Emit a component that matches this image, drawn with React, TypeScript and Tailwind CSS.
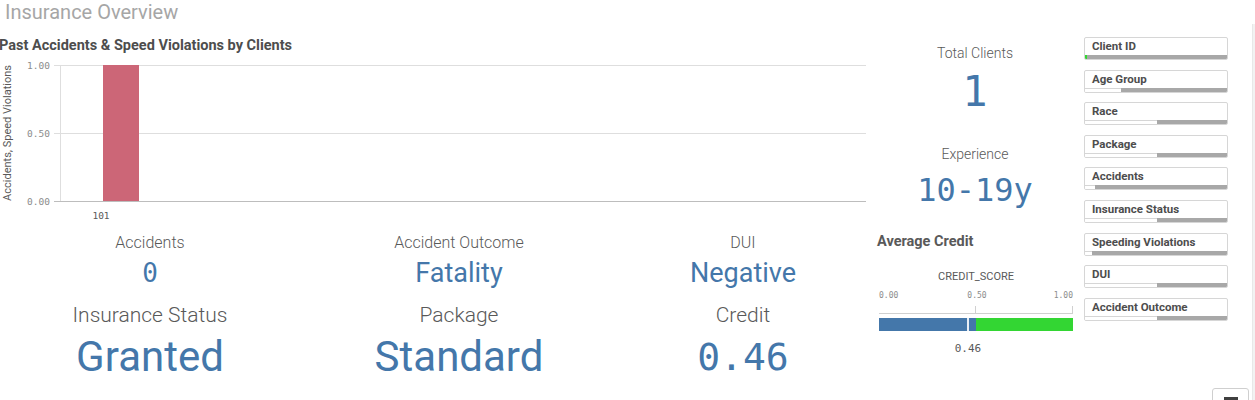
const blue = "text-[#4477aa]";

const filters = [
  { label: "Client ID", white: 0, green: true },
  { label: "Age Group", white: 36 },
  { label: "Race", white: 72 },
  { label: "Package", white: 72 },
  { label: "Accidents", white: 10 },
  { label: "Insurance Status", white: 72 },
  { label: "Speeding Violations", white: 7 },
  { label: "DUI", white: 72 },
  { label: "Accident Outcome", white: 72 },
];

function BarChart() {
  // page y = svg y + 55
  const ticks = [
    { label: "1.00", y: 10 },
    { label: "0.50", y: 78 },
    { label: "0.00", y: 146 },
  ];
  return (
    <svg width={868} height={170} className="block">
      <text
        x={11}
        y={78}
        transform="rotate(-90 11 78)"
        textAnchor="middle"
        fontSize={11}
        fill="#595959"
        fontFamily="Roboto, sans-serif"
      >
        Accidents, Speed Violations
      </text>
      {ticks.map((t) => (
        <g key={t.label}>
          <line
            x1={54}
            x2={866}
            y1={t.y + 0.5}
            y2={t.y + 0.5}
            stroke={t.y === 146 ? "#bdbdbd" : "#dedede"}
          />
          <text
            x={50}
            y={t.y + 3.5}
            textAnchor="end"
            fontSize={9.5}
            fill="#8c8c8c"
            fontFamily="'DejaVu Sans Mono', monospace"
          >
            {t.label}
          </text>
        </g>
      ))}
      <line x1={60.5} x2={60.5} y1={10} y2={146} stroke="#dedede" />
      <rect x={103} y={10} width={36} height={136} fill="#cc6677" />
      <text
        x={101}
        y={164}
        textAnchor="middle"
        fontSize={9.5}
        fill="#595959"
        fontFamily="'DejaVu Sans Mono', monospace"
      >
        101
      </text>
    </svg>
  );
}

function Kpi({
  label,
  value,
  bigLabel,
  bigValue,
  mono,
  bigMono,
  width,
}: {
  label: string;
  value: string;
  bigLabel: string;
  bigValue: string;
  mono?: boolean;
  bigMono?: boolean;
  width: string;
}) {
  return (
    <div className={`${width} flex flex-col items-center`}>
      <div className="text-[16px] leading-[20px] text-[#595959] font-light">{label}</div>
      <div
        className={`mt-[5px] leading-[30px] ${blue} ${
          mono ? "font-['DejaVu_Sans_Mono',monospace] text-[26px]" : "text-[27px]"
        }`}
      >
        {value}
      </div>
      <div className="mt-[15px] text-[21px] leading-[24px] text-[#595959] font-light">
        {bigLabel}
      </div>
      <div
        className={`mt-[7px] leading-[46px] ${blue} ${
          bigMono ? "font-['DejaVu_Sans_Mono',monospace] text-[38px]" : "text-[42px]"
        }`}
      >
        {bigValue}
      </div>
    </div>
  );
}

function Gauge() {
  return (
    <div className="ml-[11px] w-[194px]">
      <div className="text-center text-[11px] leading-[14px] text-[#595959]">CREDIT_SCORE</div>
      <div className="mt-[7px] flex justify-between text-[8px] leading-[10px] text-[#8c8c8c] font-['DejaVu_Sans_Mono',monospace]">
        <span>0.00</span>
        <span className="pl-[2px]">0.50</span>
        <span>1.00</span>
      </div>
      <svg width={194} height={31} className="block">
        <line x1={0} x2={194} y1={12.5} y2={12.5} stroke="#d0d0d0" />
        <line x1={96.5} x2={96.5} y1={5} y2={12} stroke="#d0d0d0" />
        <line x1={193.5} x2={193.5} y1={5} y2={12} stroke="#d0d0d0" />
        <rect x={0} y={17} width={97} height={13} fill="#4477aa" />
        <rect x={97} y={17} width={97} height={13} fill="#33d633" />
        <rect x={88} y={17} width={2} height={13} fill="#e8eef5" />
      </svg>
      <div className="mt-[10px] w-[178px] text-center text-[11px] leading-[14px] text-[#595959] font-['DejaVu_Sans_Mono',monospace]">
        0.46
      </div>
    </div>
  );
}

export default function App() {
  return (
    <div className="relative w-[1255px] h-[400px] overflow-hidden bg-white font-['Roboto','Liberation_Sans',sans-serif]">
      <div className="pl-[5px] h-[24px] text-[20px] leading-[24px] text-[#a6a6a6]">
        Insurance Overview
      </div>
      <div className="flex">
        {/* chart + kpis */}
        <div className="w-[868px]">
          <div className="mt-[13px] text-[14.5px] leading-[18px] font-bold text-[#4d4d4d] -ml-[1px]">
            Past Accidents &amp; Speed Violations by Clients
          </div>
          <BarChart />
          <div className="mt-[8px] flex">
            <Kpi
              width="w-[300px]"
              label="Accidents"
              value="0"
              mono
              bigLabel="Insurance Status"
              bigValue="Granted"
            />
            <Kpi
              width="w-[318px]"
              label="Accident Outcome"
              value="Fatality"
              bigLabel="Package"
              bigValue="Standard"
            />
            <Kpi
              width="w-[250px]"
              label="DUI"
              value="Negative"
              bigLabel="Credit"
              bigValue="0.46"
              bigMono
            />
          </div>
        </div>

        {/* totals + gauge */}
        <div className="w-[214px] flex flex-col">
          <div className="mt-[19px] text-center text-[14px] leading-[20px] text-[#595959] font-light">
            Total Clients
          </div>
          <div className={`mt-[7px] text-center text-[42px] leading-[44px] ${blue} font-['DejaVu_Sans_Mono',monospace]`}>
            1
          </div>
          <div className="mt-[30px] text-center text-[14px] leading-[20px] text-[#595959] font-light">
            Experience
          </div>
          <div className={`mt-[8px] text-center text-[32px] leading-[36px] ${blue} font-['DejaVu_Sans_Mono',monospace]`}>
            10-19y
          </div>
          <div className="mt-[25px] pl-[9px] text-[14.5px] leading-[18px] font-bold text-[#595959]">
            Average Credit
          </div>
          <div className="mt-[19px]">
            <Gauge />
          </div>
        </div>

        {/* filter panes */}
        <div className="ml-[2px] mt-[13px] w-[144px] flex flex-col gap-[9.6px]">
          {filters.map((f) => (
            <div
              key={f.label}
              className="h-[23px] flex flex-col border border-[#d6d6d6] rounded-[2px] bg-white overflow-hidden"
            >
              <div className="flex-1 pl-[7px] text-[11.5px] leading-[17px] font-bold text-[#4d4d4d]">
                {f.label}
              </div>
              <div className="h-[4px] flex">
                {f.green && <div className="w-[2px] bg-[#33d633]" />}
                {f.white > 0 && (
                  <div
                    className="border-t border-[#d6d6d6] bg-white"
                    style={{ width: f.white }}
                  />
                )}
                <div className="flex-1 bg-[#a8a8a8]" />
              </div>
            </div>
          ))}
        </div>

        <div className="flex-1" />
        <div className="w-[3px] h-[376px] bg-[#f2f2f2] border-l border-[#e8e8e8]" />
      </div>

      {/* small toolbar button at bottom right */}
      <div className="absolute left-[1212px] top-[388px] w-[37px] h-[20px] border border-[#cfcfcf] rounded-[3px] bg-white flex justify-center">
        <div className="mt-[8px] w-[14px] h-[3px] bg-[#404040]" />
      </div>
    </div>
  );
}
